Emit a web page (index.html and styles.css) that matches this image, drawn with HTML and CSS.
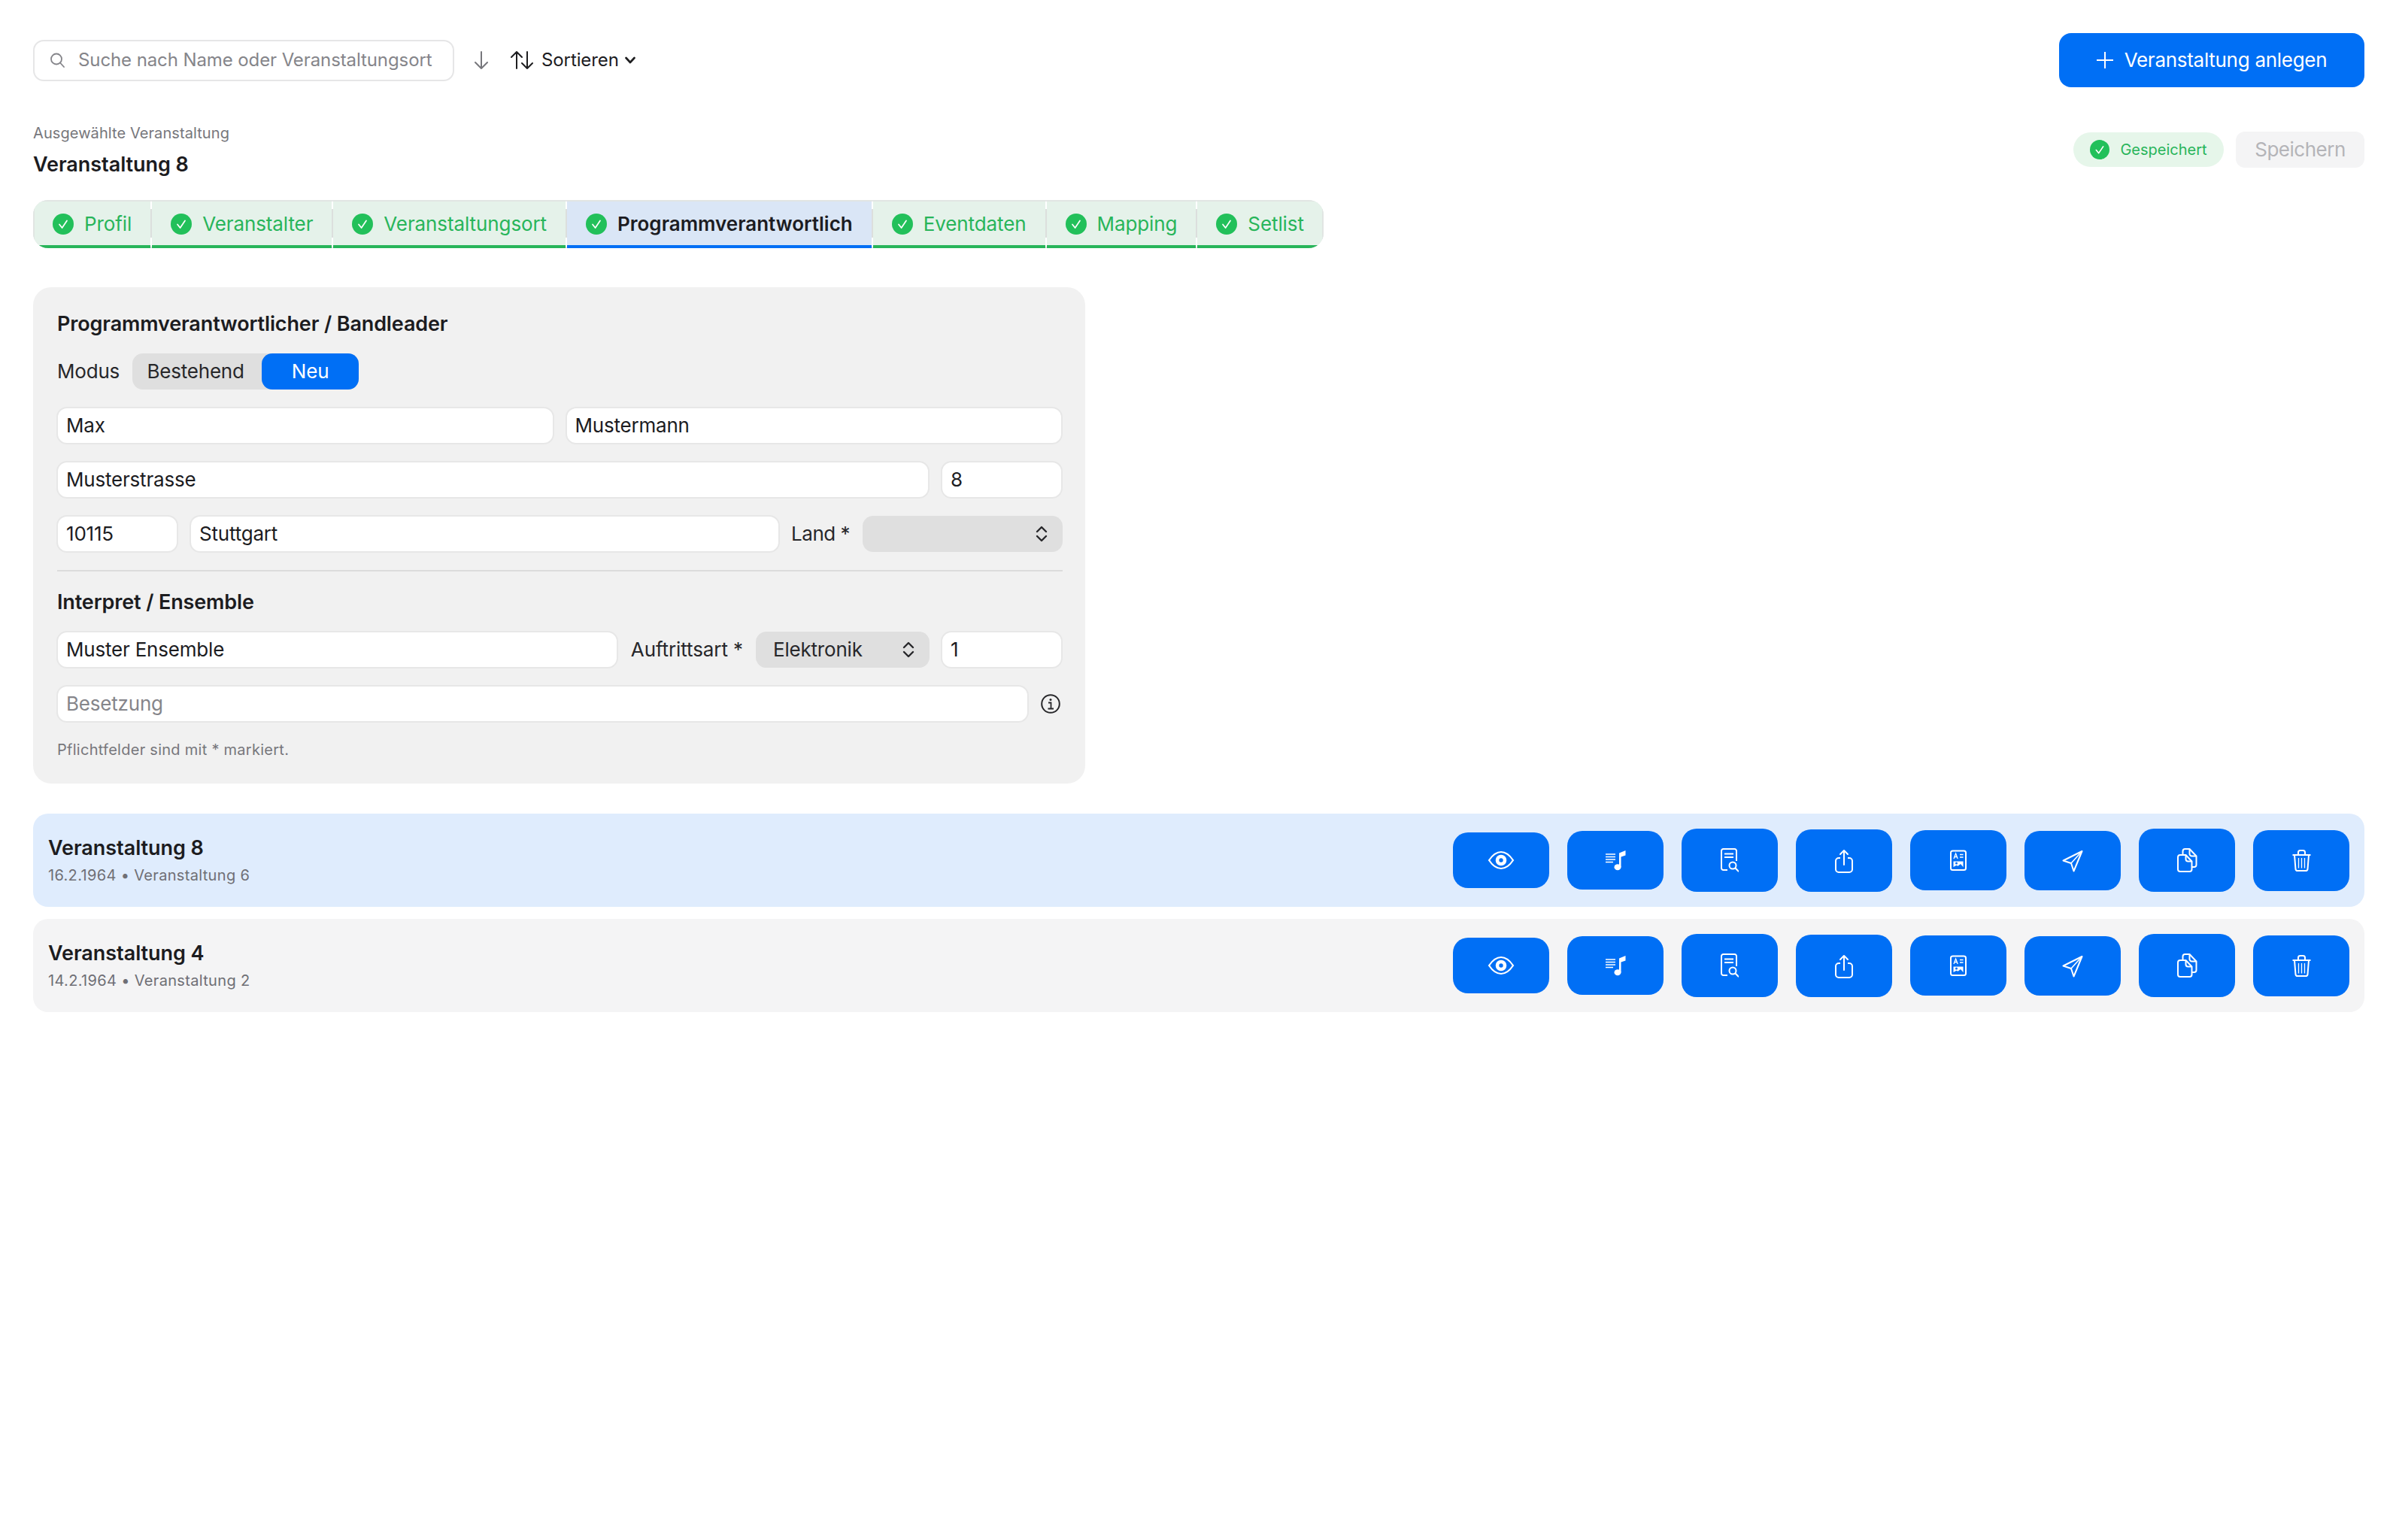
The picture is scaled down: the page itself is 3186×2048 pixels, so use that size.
FILE: index.html
```html
<!DOCTYPE html>
<html lang="de">
<head>
<meta charset="utf-8">
<title>Veranstaltungen</title>
<link rel="stylesheet" href="styles.css">
</head>
<body>
<svg class="defs" aria-hidden="true">
  <symbol id="check" viewBox="0 0 28 28">
    <circle cx="14" cy="14" r="14" fill="#22c05a"/>
    <path d="M9 14.500l3.600 4.500L19 9.500" fill="none" stroke="#fff" stroke-width="1.700" stroke-linecap="round" stroke-linejoin="round"/>
  </symbol>
  <symbol id="updown" viewBox="0 0 16 22">
    <path d="M2 8l6-6 6 6M2 14l6 6 6-6" fill="none" stroke="#27272a" stroke-width="2.400" stroke-linecap="round" stroke-linejoin="round"/>
  </symbol>
  <symbol id="i-eye" viewBox="0 0 36 26">
    <path d="M2 13C7 5.500 12 2 18 2s11 3.500 16 11c-5 7.500-10 11-16 11S7 20.500 2 13z" fill="none" stroke="#fff" stroke-width="2.200"/>
    <circle cx="18" cy="13" r="5" fill="none" stroke="#fff" stroke-width="4.600"/>
  </symbol>
  <symbol id="i-music" viewBox="0 0 27 30">
    <path d="M0 7h13M0 10.500h13M0 14h13M0 17.500h10" fill="none" stroke="#fff" stroke-width="1.300"/>
    <path d="M18 24V5.500L26.500 2v6.500l-6 2V24z" fill="#fff"/>
    <ellipse cx="16" cy="24.200" rx="4.500" ry="4" fill="#fff"/>
  </symbol>
  <symbol id="i-doc" viewBox="0 0 24 36">
    <path d="M9 31H3.500a2.500 2.500 0 0 1-2.500-2.500v-23A2.500 2.500 0 0 1 3.500 3h15A2.500 2.500 0 0 1 21 5.500V19" fill="none" stroke="#fff" stroke-width="2"/>
    <path d="M5 9.500h12M5 14h12" fill="none" stroke="#fff" stroke-width="1.800"/>
    <circle cx="16" cy="25" r="4.500" fill="none" stroke="#fff" stroke-width="2"/>
    <path d="M19.500 28.500l4 4" fill="none" stroke="#fff" stroke-width="2.200" stroke-linecap="round"/>
  </symbol>
  <symbol id="i-share" viewBox="0 0 24 35">
    <path d="M7 14H5a4 4 0 0 0-4 4v11a4 4 0 0 0 4 4h14a4 4 0 0 0 4-4V18a4 4 0 0 0-4-4h-2" fill="none" stroke="#fff" stroke-width="2"/>
    <path d="M12 23V4M7 9l5-5 5 5" fill="none" stroke="#fff" stroke-width="2" stroke-linecap="round" stroke-linejoin="round"/>
  </symbol>
  <symbol id="i-card" viewBox="0 0 22 32">
    <rect x="1" y="3.500" width="20" height="25.500" rx="2.500" fill="none" stroke="#fff" stroke-width="2"/>
    <path d="M5 14l2.600-7 2.600 7M6 11.500h3.200M13 8.500h4.500M13 12h4.500" fill="none" stroke="#fff" stroke-width="1.300"/>
    <path d="M4.500 17.500h13v7.500h-13z" fill="#fff"/>
    <circle cx="8.500" cy="20" r="1.500" fill="#006ff5"/>
    <path d="M4.500 25l4-2.200 2 1 3.500-2.800 3.500 4z" fill="#006ff5"/>
  </symbol>
  <symbol id="i-send" viewBox="0 0 28 31">
    <path d="M26.500 3L1.500 15.500l10.500 3.500 3.500 10.500z" fill="none" stroke="#fff" stroke-width="2" stroke-linejoin="round"/>
    <path d="M26.500 3L12 19" fill="none" stroke="#fff" stroke-width="1.600"/>
  </symbol>
  <symbol id="i-copy" viewBox="0 0 27 36">
    <path d="M4 11h7.500l8 8.500V30a3 3 0 0 1-3 3H4a3 3 0 0 1-3-3V14a3 3 0 0 1 3-3z" fill="none" stroke="#fff" stroke-width="2" stroke-linejoin="round"/>
    <path d="M11.500 11v5.500a3 3 0 0 0 3 3h5" fill="none" stroke="#fff" stroke-width="2"/>
    <path d="M7.500 10.500V6a3 3 0 0 1 3-3h6l9 9.500V24a3 3 0 0 1-3 3h-2.500" fill="none" stroke="#fff" stroke-width="2" stroke-linejoin="round"/>
    <path d="M16.500 3v6.500a3 3 0 0 0 3 3h6" fill="none" stroke="#fff" stroke-width="2"/>
  </symbol>
  <symbol id="i-trash" viewBox="0 0 25 33">
    <path d="M.5 9h24" fill="none" stroke="#fff" stroke-width="2"/>
    <path d="M8 9V5.500A2.500 2.500 0 0 1 10.500 3h4A2.500 2.500 0 0 1 17 5.500V9M3 9l1.500 19a2.500 2.500 0 0 0 2.500 2h11a2.500 2.500 0 0 0 2.500-2L22 9" fill="none" stroke="#fff" stroke-width="2"/>
    <path d="M8.500 13v13.500M12.500 13v13.500M16.500 13v13.500" fill="none" stroke="#fff" stroke-width="1.300"/>
  </symbol>
</svg>

<main class="page">
  <header class="toolbar">
    <div class="toolbar-left">
      <div class="search">
        <svg class="search-icon" viewBox="0 0 22 20"><circle cx="9" cy="8.500" r="7" fill="none" stroke="#85858a" stroke-width="1.800"/><path d="M14 13.500l5 5.500" fill="none" stroke="#85858a" stroke-width="1.800" stroke-linecap="round"/></svg>
        <span class="search-text">Suche nach Name oder Veranstaltungsort</span>
      </div>
      <svg class="dir-icon" viewBox="0 0 20 24"><path d="M10 1v22M2 15l8 8 8-8" fill="none" stroke="#77777c" stroke-width="2" stroke-linecap="round" stroke-linejoin="round"/></svg>
      <div class="sort">
        <svg class="sort-icon" viewBox="0 0 30 24"><path d="M8 23V1M1 8l7-7 7 7M22 1v22M15 16l7 7 7-7" fill="none" stroke="#1e1e20" stroke-width="2" stroke-linecap="round" stroke-linejoin="round"/></svg>
        <span>Sortieren</span>
        <svg class="sort-chevron" viewBox="0 0 14 10"><path d="M1.500 2L7 8l5.500-6" fill="none" stroke="#1e1e20" stroke-width="2.600" stroke-linecap="round" stroke-linejoin="round"/></svg>
      </div>
    </div>
    <button class="create" type="button">
      <svg class="plus" viewBox="0 0 22 22"><path d="M11 0v22M0 11h22" fill="none" stroke="#fff" stroke-width="2"/></svg>
      <span>Veranstaltung anlegen</span>
    </button>
  </header>

  <section class="selected">
    <div>
      <div class="selected-label">Ausgewählte Veranstaltung</div>
      <div class="selected-title">Veranstaltung 8</div>
    </div>
    <div class="save">
      <div class="saved"><svg class="saved-icon"><use href="#check"/></svg><span>Gespeichert</span></div>
      <button class="save-btn" type="button">Speichern</button>
    </div>
  </section>

  <nav class="tabs">
    <div class="tab"><svg class="tab-icon"><use href="#check"/></svg><span>Profil</span></div>
    <div class="tab"><svg class="tab-icon"><use href="#check"/></svg><span>Veranstalter</span></div>
    <div class="tab"><svg class="tab-icon"><use href="#check"/></svg><span>Veranstaltungsort</span></div>
    <div class="tab tab-active"><svg class="tab-icon"><use href="#check"/></svg><span>Programmverantwortlich</span></div>
    <div class="tab"><svg class="tab-icon"><use href="#check"/></svg><span>Eventdaten</span></div>
    <div class="tab"><svg class="tab-icon"><use href="#check"/></svg><span>Mapping</span></div>
    <div class="tab tab-last"><svg class="tab-icon"><use href="#check"/></svg><span>Setlist</span></div>
  </nav>

  <section class="panel">
    <h2 class="panel-title">Programmverantwortlicher / Bandleader</h2>
    <div class="mode">
      <span class="label">Modus</span>
      <div class="segment">
        <span class="segment-item">Bestehend</span>
        <span class="segment-item segment-on">Neu</span>
      </div>
    </div>
    <div class="row row-first">
      <div class="field grow">Max</div>
      <div class="field grow">Mustermann</div>
    </div>
    <div class="row">
      <div class="field grow">Musterstrasse</div>
      <div class="field short">8</div>
    </div>
    <div class="row">
      <div class="field short">10115</div>
      <div class="field grow">Stuttgart</div>
      <span class="label label-land">Land *</span>
      <div class="select select-land"><span></span><svg class="updown"><use href="#updown"/></svg></div>
    </div>
    <hr class="divider">
    <h2 class="panel-title panel-title-second">Interpret / Ensemble</h2>
    <div class="row row-second">
      <div class="field grow">Muster Ensemble</div>
      <span class="label label-art">Auftrittsart *</span>
      <div class="select select-art"><span>Elektronik</span><svg class="updown"><use href="#updown"/></svg></div>
      <div class="field short">1</div>
    </div>
    <div class="row">
      <div class="field grow placeholder">Besetzung</div>
      <svg class="info" viewBox="0 0 26 26"><circle cx="13" cy="13" r="11.800" fill="none" stroke="#27272a" stroke-width="2"/><circle cx="13" cy="7.500" r="1.500" fill="#27272a"/><path d="M10 11.500h3.500v7.500M9.500 19.500h7.500" fill="none" stroke="#27272a" stroke-width="1.800"/></svg>
    </div>
    <p class="hint">Pflichtfelder sind mit * markiert.</p>
  </section>

  <section class="events">
    <article class="event event-active">
      <div class="event-text">
        <div class="event-title">Veranstaltung 8</div>
        <div class="event-sub">16.2.1964 • Veranstaltung 6</div>
      </div>
      <div class="actions">
        <button class="action" type="button"><svg class="ic ic-eye"><use href="#i-eye"/></svg></button>
        <button class="action" type="button"><svg class="ic ic-music"><use href="#i-music"/></svg></button>
        <button class="action" type="button"><svg class="ic ic-doc"><use href="#i-doc"/></svg></button>
        <button class="action" type="button"><svg class="ic ic-share"><use href="#i-share"/></svg></button>
        <button class="action" type="button"><svg class="ic ic-card"><use href="#i-card"/></svg></button>
        <button class="action" type="button"><svg class="ic ic-send"><use href="#i-send"/></svg></button>
        <button class="action" type="button"><svg class="ic ic-copy"><use href="#i-copy"/></svg></button>
        <button class="action" type="button"><svg class="ic ic-trash"><use href="#i-trash"/></svg></button>
      </div>
    </article>
    <article class="event">
      <div class="event-text">
        <div class="event-title">Veranstaltung 4</div>
        <div class="event-sub">14.2.1964 • Veranstaltung 2</div>
      </div>
      <div class="actions">
        <button class="action" type="button"><svg class="ic ic-eye"><use href="#i-eye"/></svg></button>
        <button class="action" type="button"><svg class="ic ic-music"><use href="#i-music"/></svg></button>
        <button class="action" type="button"><svg class="ic ic-doc"><use href="#i-doc"/></svg></button>
        <button class="action" type="button"><svg class="ic ic-share"><use href="#i-share"/></svg></button>
        <button class="action" type="button"><svg class="ic ic-card"><use href="#i-card"/></svg></button>
        <button class="action" type="button"><svg class="ic ic-send"><use href="#i-send"/></svg></button>
        <button class="action" type="button"><svg class="ic ic-copy"><use href="#i-copy"/></svg></button>
        <button class="action" type="button"><svg class="ic ic-trash"><use href="#i-trash"/></svg></button>
      </div>
    </article>
  </section>
</main>
</body>
</html>
```

FILE: styles.css
```css
* { box-sizing: border-box; }
html, body { margin: 0; background: #fff; }
body {
  font-family: Inter, "Liberation Sans", sans-serif;
  font-size: 26px;
  line-height: 34px;
  color: #1c1c1f;
}
button { font: inherit; border: 0; cursor: pointer; }
.defs { display: none; }

.page { padding: 44px 42px 0 44px; }

.toolbar { display: flex; justify-content: space-between; align-items: center; height: 72px; }
.toolbar-left { display: flex; align-items: center; }
.search {
  width: 560px; height: 55px; display: flex; align-items: center; gap: 16px;
  padding-left: 20px; border: 2px solid #e6e6e7; border-radius: 14px; background: #fff;
}
.search-icon { width: 22px; height: 20px; flex: none; }
.search-text { font-size: 24px; letter-spacing: -0.1px; color: #85858a; white-space: nowrap; }
.dir-icon { width: 20px; height: 24px; margin-left: 26px; }
.sort { display: flex; align-items: center; margin-left: 29px; font-size: 24px; letter-spacing: -0.1px; }
.sort-icon { width: 30px; height: 24px; margin-right: 11px; }
.sort-chevron { width: 14px; height: 10px; margin-left: 8px; }

.create {
  width: 406px; height: 72px; display: flex; align-items: center; justify-content: center; gap: 15px;
  background: #006ff5; color: #fff; border-radius: 16px; font-size: 26px; letter-spacing: -0.28px;
}
.plus { width: 22px; height: 22px; }

.selected { display: flex; justify-content: space-between; align-items: center; margin-top: 46px; }
.selected-label { font-size: 20px; line-height: 30px; letter-spacing: 0.08px; color: #77777c; }
.selected-title { font-size: 27px; line-height: 34px; font-weight: 600; letter-spacing: -0.05px; margin-top: 10px; }
.save { display: flex; align-items: center; gap: 16px; }
.saved {
  width: 200px; height: 46px; display: flex; align-items: center; justify-content: center; gap: 14px;
  background: #e6f6ea; border-radius: 23px; color: #28b55a; font-size: 20px;
}
.saved-icon { width: 26px; height: 26px; }
.save-btn { width: 171px; height: 48px; background: #f4f4f5; color: #b4b4b8; border-radius: 12px; font-size: 26px; letter-spacing: -0.5px; }

.tabs {
  display: inline-flex; gap: 2px; height: 64px; margin-top: 30px; background: #fff;
  border-radius: 20px; overflow: hidden; box-shadow: inset 0 0 0 2px #e4e6e6;
  vertical-align: top;
}
.tab {
  position: relative; display: flex; align-items: center; gap: 14px; padding: 2px 25px 0 25px;
  background: #e5f2ea; color: #28b55a; border-top: 2px solid #e1e5e3; border-bottom: 4px solid #28b55a;
  white-space: nowrap; letter-spacing: -0.1px;
}
.tab::after {
  content: ""; position: absolute; top: 10px; bottom: 10px; right: -2px; width: 2px; background: #dcdfdd;
}
.tab-last::after { display: none; }
.tab:first-child { border-left: 2px solid #e1e5e3; padding-left: 24px; }
.tab-last { border-right: 2px solid #e1e5e3; padding-right: 24px; }
.tab-active { background: #dae6f6; color: #1c1c22; font-weight: 600; letter-spacing: 0; border-bottom-color: #006ff5; }
.tab-icon { width: 28px; height: 28px; flex: none; }

.panel {
  width: 1399px; margin-top: 52px; padding: 32px 30px 30px 32px;
  background: #f1f1f1; border-radius: 24px;
}
.panel-title { margin: 0; font-size: 27px; line-height: 34px; font-weight: 600; letter-spacing: -0.13px; }
.panel-title-second { margin-top: 24px; }
.mode { display: flex; align-items: center; gap: 17px; margin-top: 22px; }
.label { font-size: 26px; letter-spacing: -0.2px; white-space: nowrap; color: #27272a; }
.label-land { letter-spacing: -0.5px; margin-right: 2px; }
.label-art { letter-spacing: -0.1px; margin: 0 2px; }
.segment { display: flex; width: 301px; height: 48px; background: #dfdfdf; border-radius: 14px; }
.segment-item { display: flex; align-items: center; justify-content: center; width: 172px; padding-right: 4px; color: #27272a; letter-spacing: -0.2px; }
.segment-on { width: 129px; padding-right: 0; background: #006ff5; color: #fff; border-radius: 14px; }

.row { display: flex; align-items: center; gap: 15px; margin-top: 22px; margin-left: -1px; }
.row-first { margin-top: 23px; }
.row-second { margin-top: 21px; }
.field {
  height: 50px; display: flex; align-items: center; padding: 0 11px; min-width: 0;
  background: #fff; border: 2px solid #e7e7e7; border-radius: 14px; letter-spacing: -0.2px;
}
.grow { flex: 1; }
.short { width: 162px; flex: none; }
.placeholder { color: #85858a; }
.select {
  height: 48px; display: flex; align-items: center; justify-content: space-between; flex: none;
  padding: 0 20px 0 23px; background: #dfdfdf; border-radius: 14px; color: #27272a; letter-spacing: -0.2px;
}
.select-land { width: 266px; }
.select-art { width: 231px; }
.updown { width: 16px; height: 22px; }
.info { width: 26px; height: 26px; flex: none; margin: 0 3px 0 1px; }
.divider { margin: 23px 0 0 0; height: 2px; border: 0; background: #dcdcdc; }
.hint { margin: 21px 0 0; font-size: 20px; line-height: 30px; color: #77777c; letter-spacing: 0.27px; }

.events { display: flex; flex-direction: column; gap: 16px; margin-top: 40px; }
.event {
  display: flex; justify-content: space-between; align-items: center; height: 124px;
  padding: 0 20px; background: #f4f4f5; border-radius: 20px;
}
.event-active { background: #dfecfd; }
.event-text { padding-top: 2px; }
.event-title { font-size: 27px; line-height: 34px; font-weight: 600; letter-spacing: -0.05px; }
.event-sub { margin-top: 4px; font-size: 20px; line-height: 30px; letter-spacing: 0.33px; color: #6f6f75; }
.actions { display: flex; align-items: center; gap: 24px; }
.action {
  display: flex; align-items: center; justify-content: center; width: 128px; padding: 24px 0;
  background: #006ff5; border-radius: 20px;
}
.ic { display: block; }
.ic-eye { width: 36px; height: 26px; }
.ic-music { width: 27px; height: 30px; }
.ic-doc { width: 24px; height: 36px; }
.ic-share { width: 24px; height: 35px; }
.ic-card { width: 22px; height: 32px; }
.ic-send { width: 28px; height: 31px; }
.ic-copy { width: 27px; height: 36px; }
.ic-trash { width: 25px; height: 33px; }
```
